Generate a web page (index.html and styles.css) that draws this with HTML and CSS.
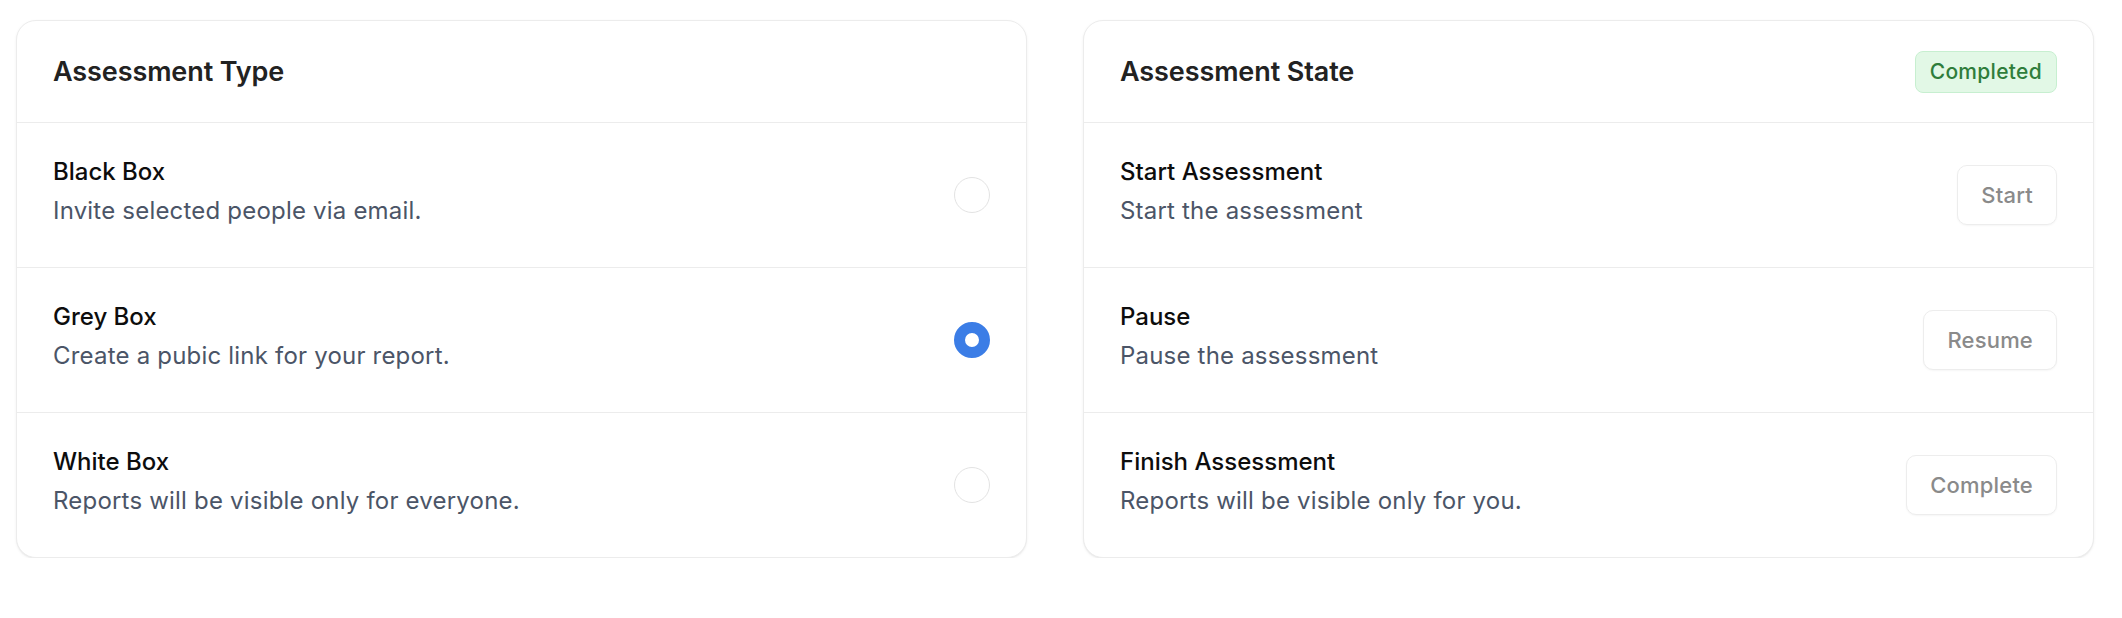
FILE: index.html
```html
<!DOCTYPE html>
<html lang="en">
<head>
<meta charset="utf-8">
<title>Assessment</title>
<link rel="stylesheet" href="styles.css">
</head>
<body>
<main class="page">
  <section class="card">
    <header class="card-head">
      <h2 class="card-title">Assessment Type</h2>
    </header>
    <div class="row">
      <div class="row-text">
        <div class="row-title">Black Box</div>
        <div class="row-desc">Invite selected people via email.</div>
      </div>
      <span class="radio"></span>
    </div>
    <div class="row">
      <div class="row-text">
        <div class="row-title">Grey Box</div>
        <div class="row-desc">Create a pubic link for your report.</div>
      </div>
      <span class="radio radio-on"></span>
    </div>
    <div class="row">
      <div class="row-text">
        <div class="row-title">White Box</div>
        <div class="row-desc">Reports will be visible only for everyone.</div>
      </div>
      <span class="radio"></span>
    </div>
  </section>

  <section class="card">
    <header class="card-head">
      <h2 class="card-title">Assessment State</h2>
      <span class="badge">Completed</span>
    </header>
    <div class="row">
      <div class="row-text">
        <div class="row-title">Start Assessment</div>
        <div class="row-desc">Start the assessment</div>
      </div>
      <button class="btn" type="button">Start</button>
    </div>
    <div class="row">
      <div class="row-text">
        <div class="row-title">Pause</div>
        <div class="row-desc">Pause the assessment</div>
      </div>
      <button class="btn" type="button">Resume</button>
    </div>
    <div class="row">
      <div class="row-text">
        <div class="row-title">Finish Assessment</div>
        <div class="row-desc">Reports will be visible only for you.</div>
      </div>
      <button class="btn" type="button">Complete</button>
    </div>
  </section>
</main>
</body>
</html>
```
FILE: styles.css
```css
* { box-sizing: border-box; }

html, body {
  margin: 0;
  padding: 0;
  background: #ffffff;
}

body {
  font-family: Inter, "Noto Sans", "Liberation Sans", sans-serif;
  color: #111111;
}

.page {
  display: grid;
  grid-template-columns: 1fr 1fr;
  column-gap: 56px;
  align-items: start;
  padding: 20px 28px 0 16px;
}

.card {
  background: #ffffff;
  border: 1px solid #ececec;
  border-radius: 20px;
  box-shadow: 0 1px 3px rgba(0, 0, 0, 0.06), 0 1px 1px rgba(0, 0, 0, 0.03);
  overflow: hidden;
}

.card-head {
  height: 102px;
  display: flex;
  align-items: center;
  justify-content: space-between;
  padding: 0 36px;
  border-bottom: 1px solid #ececec;
}

.card-title {
  margin: 0;
  font-size: 27px;
  font-weight: 600;
  color: #222222;
  letter-spacing: -0.1px;
}

.badge {
  display: inline-flex;
  align-items: center;
  height: 42px;
  padding: 0 14px;
  border-radius: 8px;
  background: #e2f8e6;
  border: 1px solid #c7efd0;
  color: #2f7d3b;
  font-size: 21px;
  font-weight: 500;
  letter-spacing: 0.3px;
}

.row {
  height: 145px;
  display: flex;
  align-items: center;
  justify-content: space-between;
  padding: 0 36px;
  border-bottom: 1px solid #ececec;
}

.row:last-child {
  border-bottom: none;
  height: 144px;
}

.row-text {
  display: flex;
  flex-direction: column;
  gap: 10px;
  padding-bottom: 8px;
}

.row-title {
  font-size: 24px;
  font-weight: 500;
  color: #0d0d0d;
  line-height: 29px;
}

.row-desc {
  font-size: 24px;
  font-weight: 400;
  color: #4b5567;
  line-height: 29px;
  letter-spacing: 0.2px;
}

.radio {
  width: 36px;
  height: 36px;
  border-radius: 50%;
  border: 1.5px solid #e3e3e3;
  background: #ffffff;
  flex: none;
}

.radio-on {
  border: 11px solid #3b7de6;
}

.btn {
  height: 60px;
  padding: 0 23px;
  border-radius: 10px;
  border: 1px solid #ededed;
  background: #ffffff;
  box-shadow: 0 1px 2px rgba(0, 0, 0, 0.04);
  color: #8a8a8a;
  font-family: inherit;
  font-size: 22px;
  font-weight: 500;
  letter-spacing: 0.2px;
}
```
